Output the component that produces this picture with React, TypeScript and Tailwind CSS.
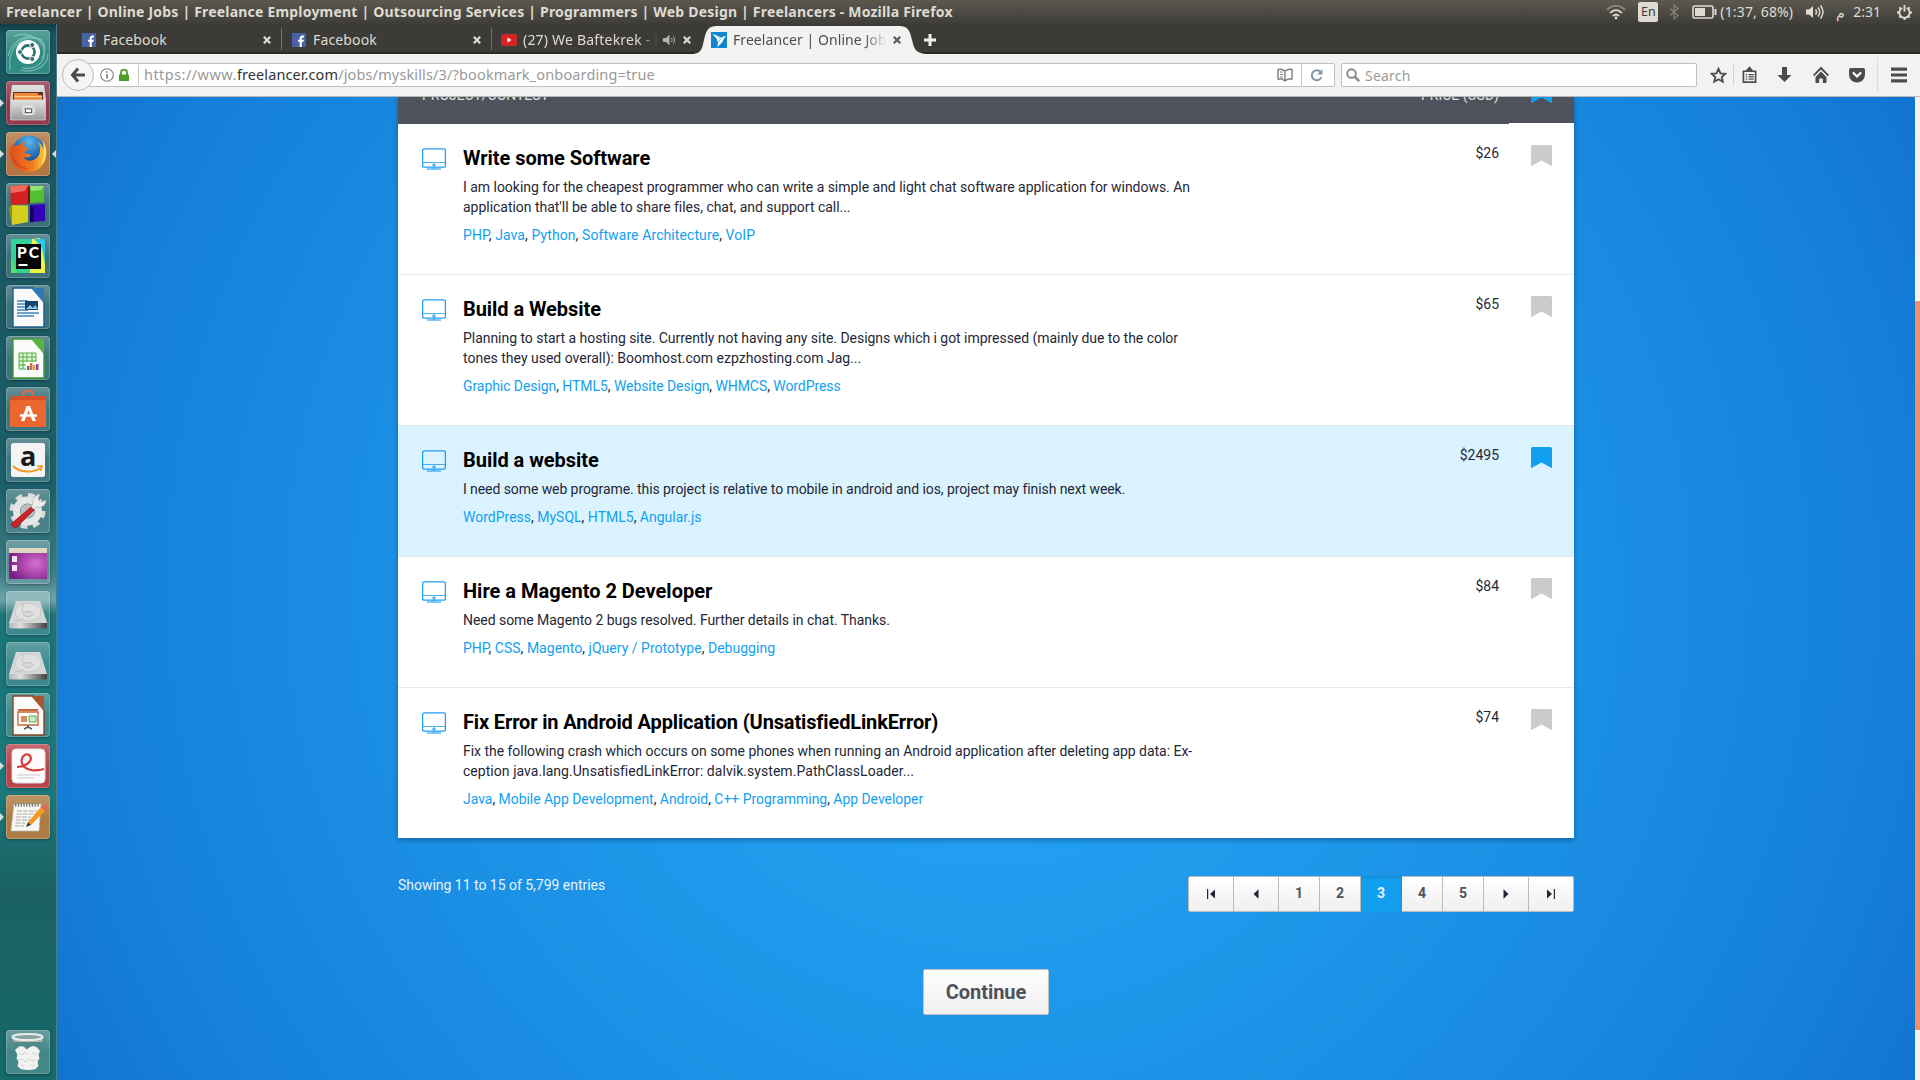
import React from "react";

const UI = "font-['Noto_Sans',sans-serif]";

type Job = {
  title: string;
  titleTrack: string;
  lines: [string, string][];
  skills: string[];
  skillTrack: string;
  price: string;
  height: string;
  saved?: boolean;
};

const jobs: Job[] = [
  {
    title: "Write some Software",
    titleTrack: "tracking-[-0.04px]",
    lines: [
      ["I am looking for the cheapest programmer who can write a simple and light chat software application for windows. An", "tracking-[-0.026px]"],
      ["application that'll be able to share files, chat, and support call...", "tracking-[-0.026px]"],
    ],
    skills: ["PHP", "Java", "Python", "Software Architecture", "VoIP"],
    skillTrack: "tracking-[0.09px]",
    price: "$26",
    height: "h-[151px] border-b",
  },
  {
    title: "Build a Website",
    titleTrack: "tracking-[-0.06px]",
    lines: [
      ["Planning to start a hosting site. Currently not having any site. Designs which i got impressed (mainly due to the color", "tracking-[-0.04px]"],
      ["tones they used overall): Boomhost.com ezpzhosting.com Jag...", "tracking-normal"],
    ],
    skills: ["Graphic Design", "HTML5", "Website Design", "WHMCS", "WordPress"],
    skillTrack: "tracking-[-0.07px]",
    price: "$65",
    height: "h-[151px] border-b",
  },
  {
    title: "Build a website",
    titleTrack: "tracking-[-0.04px]",
    lines: [["I need some web programe. this project is relative to mobile in android and ios, project may finish next week.", "tracking-[-0.08px]"]],
    skills: ["WordPress", "MySQL", "HTML5", "Angular.js"],
    skillTrack: "tracking-normal",
    price: "$2495",
    height: "h-[131px] border-b",
    saved: true,
  },
  {
    title: "Hire a Magento 2 Developer",
    titleTrack: "tracking-normal",
    lines: [["Need some Magento 2 bugs resolved. Further details in chat. Thanks.", "tracking-[-0.05px]"]],
    skills: ["PHP", "CSS", "Magento", "jQuery / Prototype", "Debugging"],
    skillTrack: "tracking-[0.02px]",
    price: "$84",
    height: "h-[131px] border-b",
  },
  {
    title: "Fix Error in Android Application (UnsatisfiedLinkError)",
    titleTrack: "tracking-[-0.14px]",
    lines: [
      ["Fix the following crash which occurs on some phones when running an Android application after deleting app data: Ex-", "tracking-[-0.03px]"],
      ["ception java.lang.UnsatisfiedLinkError: dalvik.system.PathClassLoader...", "tracking-[0.045px]"],
    ],
    skills: ["Java", "Mobile App Development", "Android", "C++ Programming", "App Developer"],
    skillTrack: "tracking-[-0.04px]",
    price: "$74",
    height: "h-[150px]",
  },
];

/* ---------- launcher icons (44x44) ---------- */

const Dash = () => (
  <svg viewBox="0 0 44 44" className="size-11">
    <g fill="none" stroke="#bfe6df" strokeWidth="1.2" opacity=".5">
      <path d="M4 40C2 22 10 8 26 8s14 16 10 20" />
      <path d="M8 6c10-4 28 0 30 14S28 40 16 38" />
      <path d="M2 26C6 10 20 2 36 10" />
      <path d="M42 24c0 12-14 20-28 16" />
    </g>
    <circle cx="22" cy="22" r="12" fill="#fff" />
    <circle cx="22" cy="22" r="6.6" fill="none" stroke="#2d716c" strokeWidth="2.6" />
    <g fill="#2d716c" stroke="#fff" strokeWidth="1">
      <circle cx="14" cy="22" r="2.5" />
      <circle cx="26.2" cy="15" r="2.5" />
      <circle cx="26.2" cy="29" r="2.5" />
    </g>
  </svg>
);

const Files = () => (
  <svg viewBox="0 0 44 44" className="size-11">
    <defs>
      <linearGradient id="cab" x1="0" y1="0" x2="0" y2="1">
        <stop offset="0" stopColor="#e2e2e2" />
        <stop offset="1" stopColor="#9a9a9a" />
      </linearGradient>
    </defs>
    <path d="M6 4h32l2 14v21H4V18z" fill="url(#cab)" />
    <path d="M7 11h30v9H7z" fill="#5e3226" />
    <path d="M8 12h23l2 2h3v6H8z" fill="#f08a3c" />
    <path d="M9 15h27v1H9z" fill="#fbd19a" />
    <path d="M5 19h34v20H5z" fill="url(#cab)" stroke="#d8d8d8" strokeWidth=".7" />
    <rect x="17" y="25.5" width="11" height="8" rx="1.5" fill="#c9c9c9" stroke="#f4f4f4" />
    <rect x="19.5" y="28" width="6" height="3.5" fill="#fff" stroke="#666" />
  </svg>
);

const Firefox = () => (
  <svg viewBox="0 0 44 44" className="size-11">
    <defs>
      <radialGradient id="globe" cx=".5" cy=".2" r=".8">
        <stop offset="0" stopColor="#5bb8ea" />
        <stop offset=".6" stopColor="#1f62ad" />
        <stop offset="1" stopColor="#12356f" />
      </radialGradient>
      <linearGradient id="fox" x1="0" y1="0" x2="1" y2="0">
        <stop offset="0" stopColor="#e0501d" />
        <stop offset=".6" stopColor="#f07a1f" />
        <stop offset="1" stopColor="#fbd43c" />
      </linearGradient>
    </defs>
    <circle cx="23" cy="20" r="16.5" fill="url(#globe)" />
    <path
      d="M6 12c-1 2-2 6-2 9 0 11 8 19 18.500 19S40 32 40.500 21c0-5-1.500-9-4-12 1 3 1.500 6 1 9-1-4-3-7-5-8 2 5 2.500 11-1 15-4 5-12 5-14 0 3 1.500 6 0 8-1.500-2-2-5-1-7-2.500 0-2 2.500-3 4-4.500-1-1.500-3-1-4.500-2 0-2 1-3.500 2-4.500-3 0-5 1.500-6.500 3.500-2-.5-3.500-.5-5 .5C7.500 12.500 6.500 12 6 12z"
      fill="url(#fox)"
    />
    <path d="M5 20c3 8 8 15 19 17-10 2-18-4-19-17z" fill="#d1401c" opacity=".6" />
    <path d="M36.500 9c4 7 5 17-1 24 3-7 3-17 1-24z" fill="#fdea74" />
  </svg>
);

const Cubes = () => (
  <svg viewBox="0 0 44 44" className="size-11">
    <path d="M4 3l18-1v19L5 22z" fill="#d42020" />
    <path d="M4 3l18-1-3 6-14 2z" fill="#ee6a5e" />
    <path d="M24 3h14v16l-14 1z" fill="#52c02e" />
    <path d="M24 3h14l-3 4-10 1z" fill="#97e476" />
    <path d="M3 25l3-3 16 .5V39L6 42z" fill="#d3cf1c" />
    <path d="M3 25l3-3v20z" fill="#8f8c10" />
    <path d="M24 22l15-1v17l-15 1z" fill="#3204b4" />
    <path d="M24 22l4 3v14h-4z" fill="#170460" />
    <path d="M22 2l2 2v16l-2 1z" fill="#7c0e0e" />
  </svg>
);

const PyCharm = () => (
  <svg viewBox="0 0 44 44" className="size-11">
    <path d="M5 5h34v34H5z" fill="#35d19b" />
    <path d="M22 5h17v20z" fill="#2bc6e8" />
    <path d="M26 5l8-1 5 26v9H24z" fill="#f0f04a" />
    <path d="M5 22l6 17H5z" fill="#57dd6b" />
    <path d="M28 5h11v12z" fill="#2bc6e8" />
    <path d="M10 10h25v25H10z" fill="#050505" />
    <text x="11" y="24" fill="#fff" fontFamily="Lato, sans-serif" fontWeight="900" fontSize="15.5" textLength="22">PC</text>
    <path d="M12.500 30h9v2h-9z" fill="#fff" />
  </svg>
);

const Sheet = ({ c, fold, children }: { c: string; fold: string; children: React.ReactNode }) => (
  <svg viewBox="0 0 44 44" className="size-11">
    <path d="M7 3h20l11 14v25H7z" fill="#fafafa" stroke={c} strokeWidth="1.4" />
    <path d="M25 3h13v15z" fill={fold} />
    {children}
  </svg>
);

const Writer = () => (
  <Sheet c="#1c5c91" fold="#2f79b5">
    <path d="M11 16h11M11 19h11M11 22h11M11 25h11M11 28h22M11 31h17" stroke="#3d87c4" strokeWidth="1.5" />
    <path d="M19 16h13v9H19z" fill="#16466b" />
    <path d="M20 24l4-4 3 3 2-3 3 4z" fill="#8fc4e8" />
  </Sheet>
);
const Calc = () => (
  <Sheet c="#3f9a2f" fold="#56b53f">
    <path d="M13 17h17v16H13z" fill="#dff3d8" />
    <path d="M13 17h17v16H13zM13 21h17M13 25h17M13 29h17M17 17v16M21 17v16M26 17v16" stroke="#54ad3f" fill="none" />
    <path d="M20 26h13v8H20z" fill="#fff" />
    <path d="M21 30h2.500v4H21z" fill="#2f79b5" />
    <path d="M24 27h2.500v7H24z" fill="#e0692c" />
    <path d="M27 29h2.500v5H27z" fill="#e5a53a" />
    <path d="M30 28h2.500v6H30z" fill="#8a4a9a" />
  </Sheet>
);
const Impress = () => (
  <Sheet c="#8a4423" fold="#a9562c">
    <path d="M12 19h20v13H12z" fill="#fff" stroke="#c8683a" strokeWidth="1.4" />
    <path d="M12 17h20" stroke="#c8683a" strokeWidth="2" />
    <path d="M15 23h6v6h-6z" fill="#d98a62" />
    <path d="M23 23h7v6h-7z" fill="#cdeec8" stroke="#58ad4b" />
    <path d="M22 32v2l-4 2M22 34l4 2" stroke="#555" strokeWidth="1.5" fill="none" />
  </Sheet>
);

const Software = () => (
  <svg viewBox="0 0 44 44" className="size-11">
    <path d="M17 12V7q0-3 3-3h4q3 0 3 3v5" fill="none" stroke="#c9705a" strokeWidth="2.5" />
    <path d="M5 9h34l1 6H4z" fill="#d85026" />
    <path d="M4 13h36v27H4z" fill="#ea672f" />
    <path d="M20.500 19h3.500l6 15h-3.500l-4-10.500L18.500 34H15z" fill="#fff" />
    <path d="M14 28.500h17" stroke="#fff" strokeWidth="2.4" />
  </svg>
);

const Amazon = () => (
  <svg viewBox="0 0 44 44" className="size-11">
    <rect x="5" y="5" width="34" height="34" rx="2.5" fill="#f4f4f4" />
    <text x="14" y="28" fill="#1b1b1b" fontFamily="Open Sans, sans-serif" fontWeight="700" fontSize="27">a</text>
    <path d="M7 28c7 7 20 7 28 2" fill="none" stroke="#f29a1f" strokeWidth="2" />
    <path d="M31 28.500l5-.5-1.500 5" fill="none" stroke="#f29a1f" strokeWidth="1.6" />
  </svg>
);

const Settings = () => (
  <svg viewBox="0 0 44 44" className="size-11">
    <circle cx="21.5" cy="22" r="15.5" fill="none" stroke="#dcdcdc" strokeWidth="5" strokeDasharray="6.6 5.57" />
    <circle cx="21.5" cy="22" r="11" fill="none" stroke="#e6e6e6" strokeWidth="7" />
    <circle cx="21.5" cy="22" r="7" fill="#bdbdbd" />
    <path d="M27 15c-1-5 2-9 7-10l-2 5 3 3 5-2c0 5-4 8-9 7l-4 3-3-2z" fill="#ececec" stroke="#aaa" strokeWidth=".6" />
    <path d="M25 18l3 3L11 38c-2 2-7-1-5-4z" fill="#c9252b" stroke="#8d1318" strokeWidth=".6" />
  </svg>
);

const Workspace = () => (
  <svg viewBox="0 0 44 44" className="size-11">
    <defs>
      <radialGradient id="pur" cx=".7" cy=".5" r=".7">
        <stop offset="0" stopColor="#d76fd0" />
        <stop offset="1" stopColor="#7b1f86" />
      </radialGradient>
    </defs>
    <path d="M3 8h38v31H3z" fill="url(#pur)" />
    <path d="M3 8h38v5H3z" fill="#ded8c0" />
    <path d="M6 16h5v6H6zM6 25h5v6H6z" fill="#f0e0f0" />
  </svg>
);

const Disk = () => (
  <svg viewBox="0 0 44 44" className="size-11">
    <defs>
      <linearGradient id="dsk" x1="0" y1="0" x2="1" y2="0">
        <stop offset="0" stopColor="#b5b5b5" />
        <stop offset=".3" stopColor="#e0e0e0" />
        <stop offset="1" stopColor="#3f3f3f" />
      </linearGradient>
    </defs>
    <path d="M10 10h24l7 22H3z" fill="#d6d8d8" />
    <path d="M3 32h38v4q0 1.500-2 1.500H5q-2 0-2-1.500z" fill="url(#dsk)" />
    <ellipse cx="22" cy="21" rx="13" ry="9" fill="#dfe1e1" stroke="#c4c6c6" strokeWidth=".8" />
    <ellipse cx="22" cy="23" rx="4.5" ry="2.5" fill="#d6d8d8" stroke="#b4b6b6" strokeWidth=".8" />
    <path d="M16 11c3 3-2 7 2 11M8 30l10-2" stroke="#b8baba" strokeWidth=".8" fill="none" />
  </svg>
);

const Reader = () => (
  <svg viewBox="0 0 44 44" className="size-11">
    <rect x="6" y="5" width="33" height="34" rx="4" fill="#fbfbfb" stroke="#ddd" />
    <path d="M11 23c11-1 16-7 13-11s-10 0-8 7 12 9 22 6" fill="none" stroke="#dd3a3a" strokeWidth="2.2" />
    <path d="M11 31h23M11 34h17" stroke="#ccc" strokeWidth="1.2" />
  </svg>
);

const Notes = () => (
  <svg viewBox="0 0 44 44" className="size-11">
    <path d="M8 9h27l-2 27H5z" fill="#f7f7f4" stroke="#bdbdb2" strokeWidth=".7" />
    <path d="M9 10h25" stroke="#777" strokeWidth="3.5" strokeDasharray="1.3 1.5" />
    <path d="M11 16h20M10.500 19h19M10 22h15M10 25h17M9.500 28h10M9 31h9" stroke="#a9a9a9" strokeWidth="1" strokeDasharray="5 1" />
    <path d="M22 27l13-15 4 4-14 14z" fill="#f39a26" />
    <path d="M35 12l2.500-3q2 0 3.500 3.500l-2 3.500z" fill="#e0655c" />
    <path d="M22 27l3 3-5 2z" fill="#4c3a26" />
  </svg>
);

const Trash = () => (
  <svg viewBox="0 0 44 44" className="size-11">
    <path d="M8 11h28l-3 27q-11 4-22 0z" fill="#4f8888" opacity=".5" />
    <path d="M9 20l4-3.500 3-.5 3 1.500 1.500 2L24 17l3-1 3.500 1L34 21l-1.500 4 1 3-2 4 1 4-3 3q-7 2-15 0l-3-3 1-4-2-4 1-3z" fill="#f1f1ef" />
    <path d="M13 23l3 2 3-3 2 3M26 22l2 3 3-2M12 30l4-1 3 3 4-3 3 2 4-1M15 35l3 1M25 35l3 1" stroke="#cfcfcb" strokeWidth=".9" fill="none" />
    <path d="M6 7h31l-1 5H8z" fill="#b4b6b4" />
    <ellipse cx="21.5" cy="7" rx="15" ry="3" fill="#8aa3a1" stroke="#eceeec" strokeWidth="2" />
  </svg>
);

const launcher = [
  { I: Dash, bg: "bg-[#2f8c83]" },
  { I: Files, bg: "bg-[#93394a]", l: true },
  { I: Firefox, bg: "bg-[#b37645]", l: true, r: true },
  { I: Cubes, bg: "bg-white/15" },
  { I: PyCharm, bg: "bg-white/15" },
  { I: Writer, bg: "bg-white/15" },
  { I: Calc, bg: "bg-white/15" },
  { I: Software, bg: "bg-white/15" },
  { I: Amazon, bg: "bg-white/15" },
  { I: Settings, bg: "bg-white/15" },
  { I: Workspace, bg: "bg-white/15" },
  { I: Disk, bg: "bg-white/15" },
  { I: Disk, bg: "bg-white/15" },
  { I: Impress, bg: "bg-white/15" },
  { I: Reader, bg: "bg-[#b8434b]", l: true },
  { I: Notes, bg: "bg-[#ad7c43]", l: true },
];

const Tile = ({ I, bg, l, r }: { I: React.FC; bg: string; l?: boolean; r?: boolean }) => (
  <div className="relative flex h-11 w-full pl-[6px]">
    <div className={`size-11 rounded-[4px] shadow-[inset_0_0_0_1px_rgba(255,255,255,0.22),0_1px_3px_rgba(0,0,0,0.35)] ${bg}`}>
      <div className="h-full w-full rounded-[4px] bg-linear-to-b from-white/20 via-transparent to-transparent">
        <I />
      </div>
    </div>
    {l && <span className="absolute top-[18px] left-0 border-y-[4px] border-l-[4px] border-y-transparent border-l-[#d5dcdc]" />}
    {r && <span className="absolute top-[18px] right-0 border-y-[4px] border-r-[4px] border-y-transparent border-r-[#d5dcdc]" />}
  </div>
);

const Launcher = () => (
  <aside className="flex w-[57px] shrink-0 flex-col gap-[7px] border-r border-[#4d7f88] bg-[linear-gradient(180deg,#123f48_0px,#1a5560_12px,#1b5a64_300px,#1c5f69_460px,#3c7d85_550px,#6fa5aa_576px,#1f7479_590px,#1a7478_620px,#1b7a7d_760px,#1b6163_870px,#196466_960px,#156a6a_1056px)] pt-[6px] pb-[6px]">
    {launcher.map((t, i) => (
      <Tile key={i} {...t} />
    ))}
    <div className="mt-auto">
      <Tile I={Trash} bg="bg-white/20" />
    </div>
  </aside>
);

/* ---------- top panel ---------- */

const TopPanel = () => (
  <header className={`flex h-6 shrink-0 items-center bg-linear-to-b from-[#5b584e] to-[#3e3d39] text-[#dfdbd2] ${UI}`}>
    <span className="ml-[6px] pb-px text-[14px] font-bold tracking-[0.2px] whitespace-nowrap">
      Freelancer | Online Jobs | Freelance Employment | Outsourcing Services | Programmers | Web Design | Freelancers - Mozilla Firefox
    </span>
    <div className="ml-auto flex h-full items-center">
      <svg viewBox="0 0 20 16" className="mr-[12px] h-4 w-5" fill="none" strokeWidth="1.8">
        <path d="M1 6c5-5.500 13-5.500 18 0" stroke="#8b887f" />
        <path d="M4 9c3.500-3.800 8.500-3.800 12 0M7 12c2-2 4-2 6 0" stroke="#dfdbd2" />
        <circle cx="10" cy="14" r="1.4" fill="#dfdbd2" />
      </svg>
      <span className="mr-[11px] flex h-5 w-5 items-center justify-center rounded-[2px] bg-[#dfdbd2] text-[12.5px] text-[#3c3b37]">
        En
      </span>
      <svg viewBox="0 0 10 16" className="mr-[13px] h-4 w-[10px]" fill="none" stroke="#85827a" strokeWidth="1.2">
        <path d="M1 4.500l8 7-4 3.500V1l4 3.500-8 7" />
      </svg>
      <svg viewBox="0 0 25 14" className="mr-[3px] h-[14px] w-[25px]" fill="none" stroke="#dfdbd2">
        <rect x="1" y="1" width="20" height="12" rx="1.5" strokeWidth="1.6" />
        <path d="M23.500 4v6" strokeWidth="2" />
        <path d="M3 3h10v8H3z" fill="#dfdbd2" stroke="none" />
      </svg>
      <span className="mr-[12px] pb-px text-[14px] tracking-[0.15px]">(1:37, 68%)</span>
      <svg viewBox="0 0 20 16" className="mr-[11px] h-4 w-5" fill="none" stroke="#dfdbd2" strokeWidth="1.5">
        <path d="M1 5.500h3L8 2v12l-4-3.500H1z" fill="#dfdbd2" stroke="none" />
        <path d="M10.500 5.500q2 2.500 0 5M13 3.500q3.500 4.500 0 9M15.500 1.500q5 6.500 0 13" />
      </svg>
      <span className="mr-[8px] text-[14px]">م</span>
      <span className="mr-[15px] pb-px text-[14px]">2:31</span>
      <svg viewBox="0 0 18 18" className="mr-[7px] size-[17px]" fill="none" stroke="#dfdbd2">
        <path d="M6.500 4.200a5.500 5.500 0 1 0 5 0" strokeWidth="2" />
        <path d="M9 1v7" strokeWidth="2" />
        <path d="M3.500 3.500l2 2M14.500 3.500l-2 2M1 9h2.500M14.500 9H17M3.500 14.500l2-2M14.500 14.500l-2-2M9 14.500V17" strokeWidth="2" />
      </svg>
    </div>
  </header>
);

/* ---------- browser chrome ---------- */

const Close = ({ c }: { c: string }) => (
  <svg viewBox="0 0 8 8" className="size-2 shrink-0" stroke={c} strokeWidth="2.2">
    <path d="M.8.8l6.400 6.400M7.200.8L.8 7.200" />
  </svg>
);

const FacebookMark = () => (
  <svg viewBox="0 0 14 14" className="size-[14px] shrink-0">
    <path d="M0 0h14v14H0z" fill="#4862a3" />
    <path d="M9.800 14V8.700h1.800l.3-2H9.800V5.400c0-.6.3-1 1.100-1H12V2.500C9.500 2.100 7.700 2.800 7.700 5v1.700H6v2h1.700V14z" fill="#fff" />
  </svg>
);

const Tabs = () => (
  <div className={`flex h-[30px] items-center bg-[#3c3b37] text-[14px] text-[#dfdbd2] shadow-[inset_0_-2px_0_#2b2a27] ${UI}`}>
    {[0, 1].map((i) => (
      <React.Fragment key={i}>
        <div className={`flex h-full items-center pt-px pr-[10px] ${i === 0 ? "w-[224px] pl-[25px]" : "w-[209px] pl-[10px]"}`}>
          <FacebookMark />
          <span className="ml-[7px] tracking-[0.15px]">Facebook</span>
          <span className="ml-auto">
            <Close c="#dfdbd2" />
          </span>
        </div>
        <span className="h-[22px] w-px bg-[#72716c]" />
      </React.Fragment>
    ))}
    <div className="flex h-full w-[202px] items-center pt-px pl-[9px]">
      <svg viewBox="0 0 16 12" className="h-3 w-4 shrink-0">
        <rect width="16" height="12" rx="2.5" fill="#d62422" />
        <path d="M6.500 3.500v5l4-2.500z" fill="#fff" />
      </svg>
      <span className="ml-[6px] w-[136px] overflow-hidden mask-r-from-85% tracking-[0.2px] whitespace-nowrap">
        {"(27) We Baftekrek - K"}
      </span>
      <svg viewBox="0 0 14 12" className="ml-[4px] h-3 w-[14px] shrink-0" fill="none" stroke="#b7b4ac">
        <path d="M0 4h3l3.500-3.500v11L3 8H0z" fill="#b7b4ac" stroke="none" />
        <path d="M8.500 4q1.500 2 0 4M10.500 2.500q2.500 3.500 0 7" />
      </svg>
      <span className="ml-[6px]">
        <Close c="#dfdbd2" />
      </span>
    </div>
    <div className="relative flex h-full w-[232px] items-center">
      <svg viewBox="0 0 232 30" className="absolute top-0 left-0 h-[30px] w-[232px]">
        <path d="M-1 30C8 29 8 24 10 16S13 2.500 22 2h184c9 .5 10 6 12 14s3 13 14 14z" fill="#f3f2f1" />
      </svg>
      <div className="relative flex w-full items-center pt-px pl-[17px] text-[#4c4c4c]">
        <svg viewBox="0 0 16 16" className="size-4 shrink-0">
          <path d="M0 0h16v16H0z" fill="#1087cd" />
          <path d="M1.500 2l6 2 3 2 1.500-1.500L15 4l-2 2.500-2 4L6.500 15l.5-4.500-1.500-4z" fill="#fff" />
          <path d="M4 2l5 4M7 10.500l3-4" stroke="#1087cd" strokeWidth=".6" />
        </svg>
        <span className="ml-[6px] w-[154px] overflow-hidden mask-r-from-85% tracking-[0.07px] whitespace-nowrap">
          Freelancer | Online Job
        </span>
        <span className="ml-[6px]">
          <Close c="#5a5a5a" />
        </span>
      </div>
    </div>
    <svg viewBox="0 0 14 14" className="mt-px -ml-[3px] size-[14px]" stroke="#f2f1f0" strokeWidth="3">
      <path d="M7 1v12M1 7h12" />
    </svg>
  </div>
);

const Toolbar = () => (
  <div className={`flex h-[43px] items-center border-b border-[#b9b7b3] bg-[#f3f2f1] pl-[5px] text-[14px] ${UI}`}>
    <div className="z-10 flex size-8 shrink-0 items-center justify-center rounded-full border border-[#bdbbb8] bg-[#f6f5f4]">
      <svg viewBox="0 0 16 16" className="size-4" fill="none" stroke="#4c4c4c" strokeWidth="3">
        <path d="M8 1.500L2.500 8 8 14.500M3 8h12" />
      </svg>
    </div>
    <div className="-ml-[6px] flex h-6 w-[1247px] items-center rounded-r-[2px] border border-[#c3c1be] bg-white pl-[11px]">
      <svg viewBox="0 0 14 14" className="size-[14px]" fill="none" stroke="#7d7d7d" strokeWidth="1.1">
        <circle cx="7" cy="7" r="6.3" />
        <path d="M7 6v4.500M7 3.300v1.500" strokeWidth="1.6" />
      </svg>
      <svg viewBox="0 0 10 12" className="ml-[5px] h-3 w-[10px]">
        <path d="M2 6V3.500a3 3 0 0 1 6 0V6" fill="none" stroke="#4f9e27" strokeWidth="1.8" />
        <path d="M0 5.500h10V12H0z" fill="#4f9e27" />
      </svg>
      <span className="ml-[9px] h-5 w-px bg-[#c9c9c9]" />
      <span className="ml-[5px] flex text-[14.5px] whitespace-nowrap text-[#999]">
        <span className="tracking-[0.45px]">https://www.</span>
        <span className="tracking-[0.1px] text-[#333]">freelancer.com</span>
        <span className="tracking-[0.14px]">/jobs/myskills/3/?bookmark_onboarding=true</span>
      </span>
      <svg viewBox="0 0 16 14" className="ml-auto h-[14px] w-4" fill="none" stroke="#7d7d7d" strokeWidth="1.4">
        <path d="M8 3Q5 .5 1 1.500V11h4l3 2 3-2h4V1.500Q11 .5 8 3v10" />
        <path d="M3 4h3M3 6.500h3M3 9h3" strokeWidth="1" />
      </svg>
      <span className="ml-[8px] h-[22px] w-px bg-[#c9c9c9]" />
      <svg viewBox="0 0 14 14" className="mr-[10px] ml-[8px] size-[14px]" fill="none" stroke="#8595a8" strokeWidth="2">
        <path d="M11 4.500A5 5 0 1 0 11.500 9" />
        <path d="M12.500 1v5.500H7z" fill="#8595a8" stroke="none" />
      </svg>
    </div>
    <div className="ml-[6px] flex h-6 w-[356px] items-center rounded-[2px] border border-[#c3c1be] bg-white pl-[4px]">
      <svg viewBox="0 0 14 14" className="size-[14px]" fill="none" stroke="#8a8a8a" strokeWidth="1.9">
        <circle cx="5.5" cy="5.5" r="4.3" />
        <path d="M8.700 8.700l4.500 4.500" strokeWidth="2.4" />
      </svg>
      <span className="ml-[5px] tracking-[0.2px] text-[#999]">Search</span>
    </div>
    <div className="flex h-full flex-1 items-center">
      <svg viewBox="0 0 18 18" className="ml-[13px] size-[17px]" fill="none" stroke="#4c4c4c" strokeWidth="2">
        <path d="M9 2l2.100 4.700 5.100.5-3.800 3.400 1.100 5L9 13l-4.500 2.600 1.100-5L1.800 7.200l5.100-.5z" />
      </svg>
      <span className="ml-[6px] h-5 w-px bg-[#d0cfcc]" />
      <svg viewBox="0 0 16 18" className="ml-[8px] h-[18px] w-[15px]" fill="none" stroke="#4c4c4c" strokeWidth="1.8">
        <path d="M1.500 5h13v11.500h-13z" />
        <path d="M5 4.500L8 1l3 3.500z" fill="#4c4c4c" />
        <path d="M4 8.500h1.500M7 8.500h5.500M4 11h1.500M7 11h5.500M4 13.500h1.500M7 13.500h5.500" strokeWidth="1.3" />
      </svg>
      <svg viewBox="0 0 14 18" className="ml-[20px] h-[18px] w-[15px]" fill="#4c4c4c">
        <path d="M4.500 1h5v8H14l-7 7-7-7h4.500z" />
      </svg>
      <svg viewBox="0 0 16 18" className="ml-[21px] h-[18px] w-4" fill="#4c4c4c">
        <path d="M8 .5l8 8.500-1.200 1.200L8 3.500 1.200 10.200 0 9z" />
        <path d="M8 5.500l5.500 5.500v6H9.800v-4.500H6.200V17H2.500v-6z" />
      </svg>
      <svg viewBox="0 0 16 16" className="ml-[20px] size-4">
        <path d="M2 1h12q2 0 2 2v4.500a8 8 0 0 1-16 0V3q0-2 2-2z" fill="#4c4c4c" />
        <path d="M4.500 6L8 9.500 11.500 6" fill="none" stroke="#fff" strokeWidth="2.2" strokeLinecap="round" />
      </svg>
      <span className="ml-[12px] h-[34px] w-px bg-[#dddbd8]" />
      <svg viewBox="0 0 16 16" className="ml-[13px] size-4" stroke="#4c4c4c" strokeWidth="3.2">
        <path d="M0 2.200h16M0 8h16M0 13.800h16" />
      </svg>
    </div>
  </div>
);

/* ---------- page ---------- */

const Bookmark = ({ c }: { c: string }) => (
  <svg viewBox="0 0 21 21" className="size-[21px]">
    <path d="M1.500 0h18q1.500 0 1.500 1.500V21h-.5L10.500 15.500.5 21H0V1.500Q0 0 1.500 0z" fill={c} />
  </svg>
);

const Monitor = () => (
  <svg viewBox="0 0 24 22" className="h-[22px] w-6" fill="none" stroke="#1f9ff0">
    <rect x=".6" y=".9" width="22.8" height="18.2" rx="1.5" strokeWidth="1.3" />
    <path d="M1 14.500h22" strokeWidth="1" opacity=".8" />
    <path d="M10 17h4M12 15v6" strokeWidth="1" />
    <path d="M5 21h14" strokeWidth="1.4" opacity=".8" />
  </svg>
);

const JobRow = ({ job }: { job: Job }) => (
  <div className={`flex border-[#e8e9ec] pl-[24px] ${job.height} ${job.saved ? "bg-[#dbf3ff]" : "bg-white"}`}>
    <div className="w-[41px] shrink-0 pt-[24px]">
      <Monitor />
    </div>
    <div className="flex-1 pt-[22px] whitespace-nowrap">
      <h3 className={`text-[20px] leading-6 font-bold text-black ${job.titleTrack}`}>{job.title}</h3>
      <div className="mt-[7px] text-[14px] leading-5 text-[#1f2836]">
        {job.lines.map(([l, track]) => (
          <p key={l} className={track}>{l}</p>
        ))}
      </div>
      <p className={`mt-[8px] text-[14px] leading-5 text-[#1f2836] ${job.skillTrack}`}>
        {job.skills.map((s, i) => (
          <React.Fragment key={s}>
            {i > 0 && ", "}
            <a className="text-[#139ff0]">{s}</a>
          </React.Fragment>
        ))}
      </p>
    </div>
    <span className="pt-[19px] text-[14px] leading-5 text-[#1f2836]">{job.price}</span>
    <div className="w-[75px] pt-[21px] pl-[32px]">
      <Bookmark c={job.saved ? "#139ff0" : "#cbcbcb"} />
    </div>
  </div>
);

const Arrow = ({ flip, bar }: { flip?: boolean; bar?: boolean }) => (
  <svg viewBox="0 0 10 10" className={`size-[10px] ${flip ? "-scale-x-100" : ""}`} fill="#1f2836">
    {bar ? <path d="M1 0h1.200v10H1zM9 .5v9L4 5z" /> : <path d="M7.500.3v9.400L2.500 5z" />}
  </svg>
);

const Pager = () => (
  <div className="flex h-9 overflow-hidden rounded-[2px] text-[14px] font-bold text-[#4d525b]">
    {["first", "prev", "1", "2", "3", "4", "5", "next", "last"].map((p) => {
      const arrow = p.length > 1;
      if (p === "3")
        return (
          <span key={p} className="flex w-[41px] items-center justify-center bg-[#139ff0] pr-px pb-[2px] text-[#e3f4ff] shadow-[inset_0_2px_3px_rgba(0,0,0,0.12)]">
            3
          </span>
        );
      return (
        <span
          key={p}
          className={`flex items-center justify-center border-y border-r border-[#bcbcbc] bg-linear-to-b from-white to-[#efefef] ${arrow ? "" : "w-[41px] pb-[2px]"} ${p === "first" ? "w-[46px] rounded-l-[2px] border-l" : arrow ? "w-[45px]" : ""} ${p === "last" ? "rounded-r-[2px]" : ""}`}
        >
          {p === "first" && <Arrow bar />}
          {p === "prev" && <Arrow />}
          {p === "next" && <Arrow flip />}
          {p === "last" && <Arrow flip bar />}
          {!arrow && p}
        </span>
      );
    })}
  </div>
);

const Page = () => (
  <main className="flex min-h-0 flex-1">
    <div className="min-w-0 flex-1 overflow-hidden bg-[radial-gradient(circle_farthest-corner_at_931px_491px,#23a4f3_0%,#209dee_28%,#1b90e4_56%,#1580d9_86%,#1273d0_100%)] font-[Roboto,sans-serif]">
      <div className="ml-[341px] w-[1176px]">
        <section className="bg-white shadow-[0_2px_5px_rgba(0,0,0,0.3)]">
          <div className="flex h-[27px] text-[14px] leading-5 text-[#dfe1e4]">
            <div className="flex h-[27px] flex-1 bg-[#4d525b] pr-[10px] pl-[24px]">
              <span className="-mt-[12px] self-start tracking-[-0.03px]">PROJECT/CONTEST</span>
              <span className="-mt-[12px] ml-auto self-start">PRICE (USD)</span>
            </div>
            <div className="h-[26px] w-[65px] bg-[#4d525b] pl-[22px]">
              <div className="-mt-[15px]">
                <Bookmark c="#139ff0" />
              </div>
            </div>
          </div>
          {jobs.map((j) => (
            <JobRow key={j.title} job={j} />
          ))}
        </section>
        <div className="flex items-start justify-between pt-[38px]">
          <span className="-mt-px text-[14px] leading-5 tracking-[-0.02px] text-[#e6f4fe]">Showing 11 to 15 of 5,799 entries</span>
          <Pager />
        </div>
        <div className="mt-[57px] flex justify-center">
          <button className="h-[46px] w-[126px] rounded-[2px] border border-[#c0c0c0] bg-linear-to-b from-white to-[#efefef] text-[20px] font-bold tracking-[-0.05px] text-[#4d525b]">
            Continue
          </button>
        </div>
      </div>
    </div>
    <div className="flex w-[5px] flex-col bg-[#f3f2f1] pt-[204px]">
      <div className="h-[729px] rounded-t-[1px] bg-[#f08f69]" />
    </div>
  </main>
);

export default function App() {
  return (
    <div className="flex h-[1080px] w-[1920px] flex-col overflow-hidden">
      <TopPanel />
      <div className="flex min-h-0 flex-1">
        <Launcher />
        <div className="flex min-w-0 flex-1 flex-col">
          <Tabs />
          <Toolbar />
          <Page />
        </div>
      </div>
    </div>
  );
}
